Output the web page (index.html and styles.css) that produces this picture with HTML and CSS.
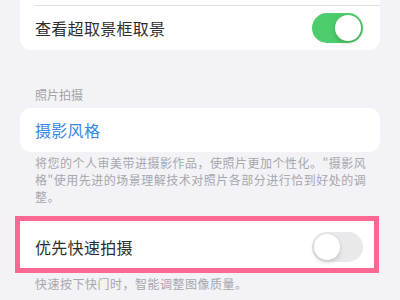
FILE: index.html
```html
<!DOCTYPE html>
<html lang="zh-CN">
<head>
    <meta charset="UTF-8">
    <meta name="viewport" content="width=device-width, initial-scale=1.0">
    <title>相机设置</title>
    <link rel="stylesheet" href="styles.css">
</head>
<body>

    <div class="page">

        <!-- Composition group (scrolled, first row above the window) -->
        <div class="group">
            <div class="row"></div>
            <div class="row">
                <span class="label">查看超取景框取景</span>
                <div class="switch on"><span class="knob"></span></div>
            </div>
        </div>

        <!-- Photo capture section -->
        <div class="section-title">照片拍摄</div>
        <div class="group">
            <div class="row">
                <span class="label link">摄影风格</span>
            </div>
        </div>
        <div class="section-footer">
            将您的个人审美带进摄影作品，使照片更加个性化。"摄影风格"使用先进的场景理解技术对照片各部分进行恰到好处的调整。
        </div>

        <div class="highlight">
            <div class="group flat">
                <div class="row">
                    <span class="label">优先快速拍摄</span>
                    <div class="switch"><span class="knob"></span></div>
                </div>
            </div>
        </div>
        <div class="section-footer">
            快速按下快门时，智能调整图像质量。
        </div>

    </div>

</body>
</html>
```

FILE: styles.css
```css
/* General body styling */
body {
    margin: 0;
    padding: 0;
    background-color: #f2f2f7;
    font-family: "Noto Sans CJK SC", "Noto Sans", sans-serif;
    color: #2e2e30;
}

/* Page is scrolled a bit, first row sits above the window */
.page {
    margin-top: -39px;
    padding: 0 20px;
}

/* Grouped list */
.group {
    background-color: #ffffff;
    border-radius: 11px;
    overflow: hidden;
}
.row {
    height: 44px;
    margin-left: 15px;
    padding-right: 17px;
    display: flex;
    align-items: center;
    justify-content: space-between;
    font-size: 16px;
}
.row + .row {
    border-top: 1px solid #e0e0e4;
}
.label {
    letter-spacing: 0.3px;
}
.link {
    color: #3a87e6;
}

/* Section texts */
.section-title {
    margin: 37px 0 5px;
    padding: 0 15px;
    font-size: 12px;
    line-height: 16px;
    color: #a2a2a7;
}
.section-footer {
    padding: 2px 8px 0 15px;
    font-size: 12px;
    line-height: 17px;
    letter-spacing: 0.5px;
    color: #a7a7ac;
}

/* Switch */
.switch {
    width: 51px;
    height: 30px;
    box-sizing: border-box;
    padding: 2px;
    border-radius: 15px;
    background-color: #e9e9eb;
    display: flex;
    align-items: center;
}
.switch.on {
    background-color: #4ccd6b;
    justify-content: flex-end;
}
.knob {
    width: 26px;
    height: 26px;
    border-radius: 50%;
    background-color: #ffffff;
    box-shadow: 0 2px 5px rgba(0, 0, 0, 0.18);
}

/* Pink annotation frame around the highlighted row */
.highlight {
    margin: 11px 1px 0 -5px;
    border: 5px solid #fb6892;
}
.flat {
    border-radius: 0;
}
.flat .row {
    height: 47px;
    box-sizing: border-box;
    padding-top: 5px;
    padding-right: 11px;
}
.highlight + .section-footer {
    padding-top: 2px;
}
```
